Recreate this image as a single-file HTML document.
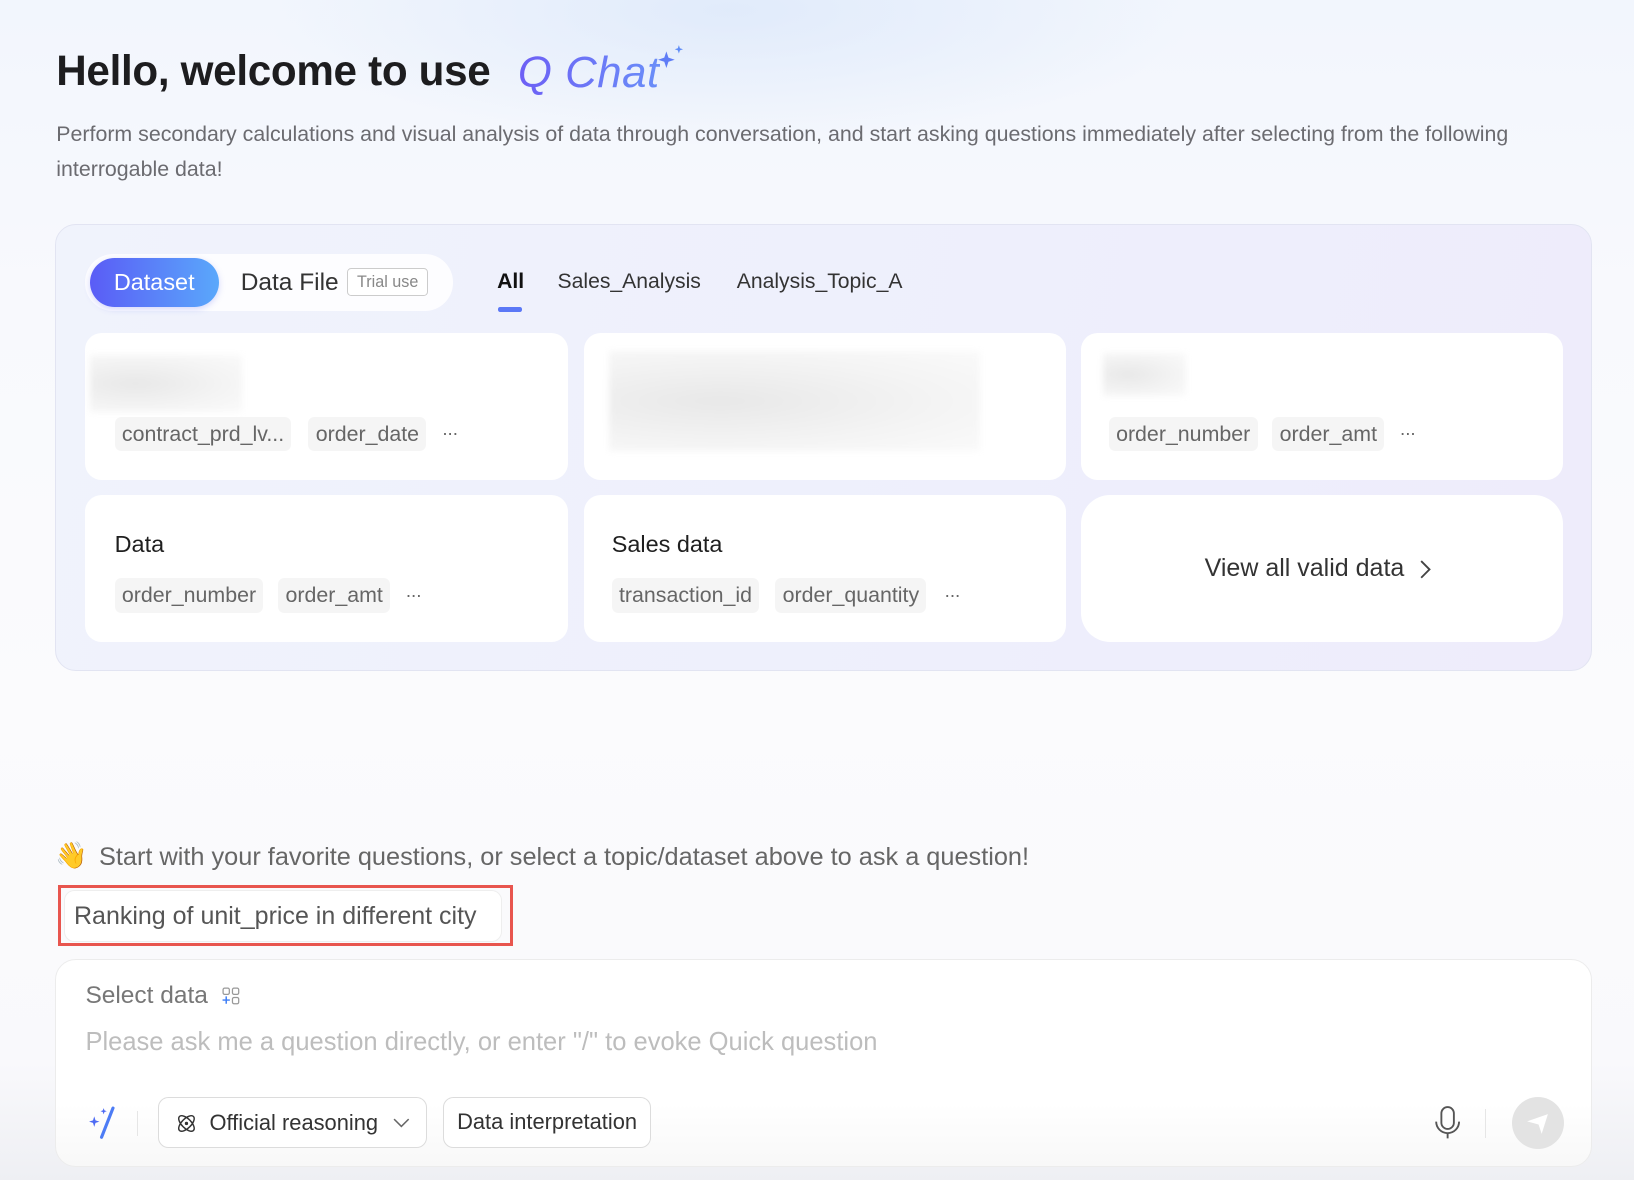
<!DOCTYPE html>
<html><head><meta charset="utf-8"><style>
*{margin:0;padding:0;box-sizing:border-box}
html,body{width:1634px;height:1180px;overflow:hidden;background:#f9f9fc;font-family:"Liberation Sans",Arial,sans-serif}
#w{position:relative;width:1568px;height:1133px;zoom:1.04209;background:linear-gradient(180deg,#f2f6fd 0%,#f8f9fd 25%,#fbfbfd 60%,#f9f9fc 90%,#eeeff3 100%)}
.a{position:absolute;white-space:nowrap}
.glow{position:absolute;left:250px;top:-120px;width:900px;height:260px;border-radius:50%;background:radial-gradient(ellipse,rgba(220,232,250,.8),rgba(240,245,253,0) 70%)}
h1{position:absolute;left:54px;top:45px;font-size:40.5px;font-weight:700;color:#1d1d1f;letter-spacing:-.3px;white-space:nowrap}
.qc{position:absolute;left:497px;top:46px;font-size:42px;font-style:italic;font-family:"Liberation Sans",sans-serif;letter-spacing:.5px;background:linear-gradient(90deg,#6d5ff5,#6a8ef8);-webkit-background-clip:text;color:transparent;white-space:nowrap}
.sub{position:absolute;left:54px;top:112px;width:1450px;font-size:20.5px;line-height:34px;color:#6b6b70}
.panel{position:absolute;left:53px;top:215px;width:1475px;height:429px;border-radius:20px;background:linear-gradient(100deg,#f0f3fc,#eeeffc 60%,#eeecfb);border:1px solid #e2e4f2}
.pill{position:absolute;left:82px;top:244px;width:353px;height:54px;border-radius:27px;background:#fdfdff}
.ds{position:absolute;left:86px;top:248px;width:124px;height:47px;border-radius:24px;background:linear-gradient(90deg,#5a5cf6,#5aa8fb);color:#fff;font-size:22.5px;line-height:47px;text-align:center;box-shadow:0 2px 6px rgba(90,100,240,.25)}
.tab{font-size:20.3px;color:#333;top:259px}
.card{position:absolute;background:#fff;border-radius:16px;width:463px;height:141px}
.chip{position:absolute;height:33px;line-height:33px;padding:0 7px;background:#f5f5f5;border-radius:6px;font-size:20.5px;color:#666;white-space:nowrap}
.dots{position:absolute;font-size:18px;color:#666;letter-spacing:-1px}
.blur{position:absolute;background:radial-gradient(ellipse at 30% 50%,#e8e8e8,#f4f4f4 60%,#fafafa);filter:blur(3px)}
.ct{position:absolute;font-size:22.5px;color:#1f1f1f}
.btn{position:absolute;top:1053px;height:49px;border:1px solid #dcdcdc;border-radius:10px;background:#fff;font-size:21px;color:#333;line-height:47px}
</style></head><body><div id="w">
<div class="glow"></div>
<h1>Hello, welcome to use</h1>
<div class="qc">Q Chat</div>
<svg class="a" style="left:630px;top:40px" width="30" height="30" viewBox="0 0 30 30"><path d="M9 9 L11 15 L17 17 L11 19 L9 25 L7 19 L1 17 L7 15Z" fill="#5f7cf6"/><path d="M21 3 L22 6 L25 7 L22 8 L21 11 L20 8 L17 7 L20 6Z" fill="#5f8cf7"/></svg>
<div class="sub">Perform secondary calculations and visual analysis of data through conversation, and start asking questions immediately after selecting from the following interrogable data!</div>

<div class="panel"></div>
<div class="pill"></div>
<div class="ds">Dataset</div>
<div class="a" style="left:231px;top:258px;font-size:23.5px;color:#333">Data File</div>
<div class="a" style="left:333px;top:257px;width:78px;height:27px;border:1px solid #ccc;border-radius:4px;font-size:15.5px;color:#888;text-align:center;line-height:25px;background:#fff">Trial use</div>
<div class="a tab" style="left:477px;font-weight:700;color:#111">All</div>
<div class="a" style="left:478px;top:295px;width:23px;height:4px;border-radius:2px;background:#5b78f6"></div>
<div class="a tab" style="left:535px">Sales_Analysis</div>
<div class="a tab" style="left:707px">Analysis_Topic_A</div>

<div class="card" style="left:82px;top:320px"></div>
<div class="card" style="left:560px;top:320px"></div>
<div class="card" style="left:1037px;top:320px"></div>
<div class="card" style="left:82px;top:475px"></div>
<div class="card" style="left:560px;top:475px"></div>
<div class="card" style="left:1037px;top:475px;border-radius:28px"></div>

<div class="blur" style="left:86px;top:341px;width:146px;height:54px"></div>
<div class="chip" style="left:110px;top:400px">contract_prd_lv...</div>
<div class="chip" style="left:296px;top:400px">order_date</div>
<div class="dots" style="left:424px;top:405px">···</div>

<div class="blur" style="left:584px;top:337px;width:356px;height:96px"></div>

<div class="blur" style="left:1058px;top:339px;width:80px;height:41px"></div>
<div class="chip" style="left:1064px;top:400px">order_number</div>
<div class="chip" style="left:1221px;top:400px">order_amt</div>
<div class="dots" style="left:1343px;top:405px">···</div>

<div class="ct" style="left:110px;top:510px">Data</div>
<div class="chip" style="left:110px;top:555px">order_number</div>
<div class="chip" style="left:267px;top:555px">order_amt</div>
<div class="dots" style="left:389px;top:560px">···</div>

<div class="ct" style="left:587px;top:510px">Sales data</div>
<div class="chip" style="left:587px;top:555px">transaction_id</div>
<div class="chip" style="left:744px;top:555px">order_quantity</div>
<div class="dots" style="left:906px;top:560px">···</div>

<div class="a" style="left:1156px;top:532px;font-size:24px;color:#333">View all valid data</div>
<svg class="a" style="left:1360px;top:536px" width="16" height="20" viewBox="0 0 16 20"><path d="M4 2 L12 10 L4 18" fill="none" stroke="#444" stroke-width="1.8"/></svg>

<div class="a" style="left:53px;top:807px;font-size:25px;font-family:'DejaVu Sans',sans-serif">👋</div>
<div class="a" style="left:95px;top:809px;font-size:24.3px;color:#666">Start with your favorite questions, or select a topic/dataset above to ask a question!</div>
<div class="a" style="left:56px;top:849px;width:436px;height:59px;border:3px solid #e8554e"></div>
<div class="a" style="left:61px;top:854px;width:421px;height:50px;border:1px solid #eee;border-radius:10px;background:#fff"></div>
<div class="a" style="left:71px;top:866px;font-size:24px;color:#555">Ranking of unit_price in different city</div>

<div class="a" style="left:53px;top:920px;width:1475px;height:200px;border-radius:20px;background:linear-gradient(180deg,#fff 70%,#f8f8f8);border:1px solid #ececec"></div>
<div class="a" style="left:82px;top:942px;font-size:23.5px;color:#777">Select data</div>
<svg class="a" style="left:212px;top:946px" width="20" height="20" viewBox="0 0 20 20"><rect x="2" y="2" width="6" height="6" rx="1.5" fill="none" stroke="#999" stroke-width="1.2"/><rect x="11" y="2" width="6" height="6" rx="1.5" fill="none" stroke="#999" stroke-width="1.2"/><rect x="11" y="11" width="6" height="6" rx="1.5" fill="none" stroke="#999" stroke-width="1.2"/><path d="M5 10v7M1.5 13.5h7" stroke="#3b7cf6" stroke-width="1.4"/></svg>
<div class="a" style="left:82px;top:986px;font-size:24.5px;color:#bdbdbd">Please ask me a question directly, or enter "/" to evoke Quick question</div>
<svg class="a" style="left:84px;top:1061px" width="28" height="32" viewBox="0 0 28 32"><path d="M24 2 L13 30" stroke="#4d7cf5" stroke-width="3" stroke-linecap="round"/><path d="M6 10 L7.2 13.8 L11 15 L7.2 16.2 L6 20 L4.8 16.2 L1 15 L4.8 13.8Z" fill="#4d6af3"/><path d="M15 2 L15.8 4.2 L18 5 L15.8 5.8 L15 8 L14.2 5.8 L12 5 L14.2 4.2Z" fill="#4d6af3"/></svg>
<div class="a" style="left:131px;top:1066px;width:1px;height:24px;background:#e6e6e6"></div>
<div class="btn" style="left:152px;width:258px"></div>
<svg class="a" style="left:168px;top:1067px" width="22" height="22" viewBox="0 0 22 22"><ellipse cx="11" cy="11" rx="9.5" ry="4.5" transform="rotate(45 11 11)" fill="none" stroke="#333" stroke-width="1.4"/><ellipse cx="11" cy="11" rx="9.5" ry="4.5" transform="rotate(-45 11 11)" fill="none" stroke="#333" stroke-width="1.4"/><circle cx="11" cy="11" r="1.6" fill="#333"/></svg>
<div class="a" style="left:201px;top:1065px;font-size:21px;color:#333">Official reasoning</div>
<svg class="a" style="left:376px;top:1071px" width="18" height="12" viewBox="0 0 18 12"><path d="M2 3 L9 10 L16 3" fill="none" stroke="#666" stroke-width="1.5"/></svg>
<div class="btn" style="left:425px;width:200px;text-align:center">Data interpretation</div>
<svg class="a" style="left:1374px;top:1060px" width="30" height="34" viewBox="0 0 30 34"><rect x="9" y="2" width="12" height="21" rx="6" fill="none" stroke="#555" stroke-width="1.8"/><path d="M4 16 a11 11 0 0 0 22 0 M15 27v5" fill="none" stroke="#555" stroke-width="1.8"/></svg>
<div class="a" style="left:1425px;top:1064px;width:1px;height:28px;background:#e6e6e6"></div>
<div class="a" style="left:1451px;top:1053px;width:50px;height:50px;border-radius:50%;background:#e3e3e3"></div>
<svg class="a" style="left:1463px;top:1066px" width="26" height="24" viewBox="0 0 26 24"><path d="M2 10 L22 3 L16 22 L13 13Z" fill="#fff"/></svg>
</div></body></html>
